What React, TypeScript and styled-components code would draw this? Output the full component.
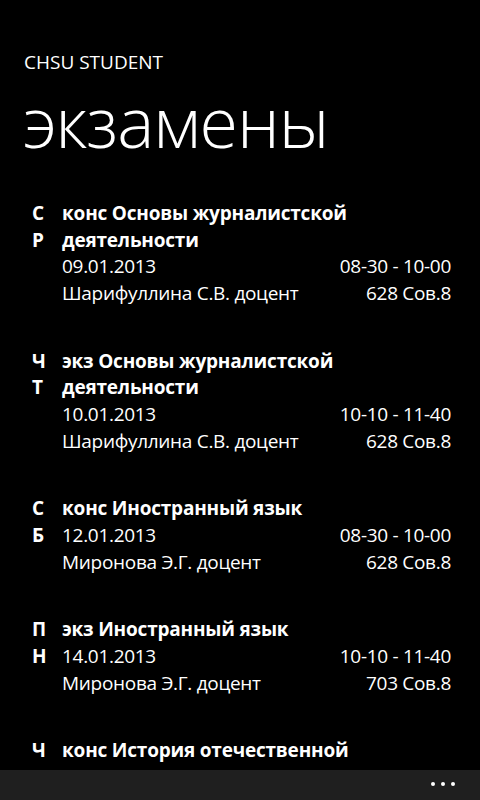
import React from "react";
import styled, { createGlobalStyle } from "styled-components";

const Global = createGlobalStyle`
  html, body {
    margin: 0;
    padding: 0;
    background: #000;
    overflow: hidden;
  }
  body {
    font-family: "Open Sans", "Noto Sans", sans-serif;
    color: #fff;
  }
`;

const Page = styled.div`
  width: 480px;
  height: 800px;
  background: #000;
  display: flex;
  flex-direction: column;
  overflow: hidden;
`;

const Scroller = styled.main`
  flex: 1;
  min-height: 0;
  overflow: hidden;
`;

const Header = styled.header`
  padding: 50px 0 0 24px;
`;

const AppTitle = styled.div`
  font-size: 19px;
  line-height: 24px;
`;

const PageTitle = styled.h1`
  margin: 7px 0 0 -2px;
  font-size: 70px;
  font-weight: 300;
  line-height: 80px;
  letter-spacing: -1px;
`;

const List = styled.div`
  display: flex;
  flex-direction: column;
  gap: 41px;
  padding: 0 29px 0 32px;
  margin-top: 39px;
`;

const Entry = styled.div`
  display: flex;
  font-size: 19px;
  line-height: 26.67px;
`;

const Day = styled.div`
  width: 30px;
  flex: none;
  font-weight: 700;
  display: flex;
  flex-direction: column;
`;

const Body = styled.div`
  flex: 1;
  min-width: 0;
`;

const Subject = styled.div`
  font-weight: 700;
  letter-spacing: -0.2px;
`;

const Row = styled.div`
  display: flex;
  justify-content: space-between;
  letter-spacing: -0.3px;
`;

const AppBar = styled.footer`
  flex: none;
  height: 30px;
  background: #1f1f1f;
  display: flex;
  justify-content: flex-end;
  align-items: center;
  padding-right: 25px;
  gap: 6px;
`;

const Dot = styled.span`
  width: 4px;
  height: 4px;
  border-radius: 50%;
  background: #fff;
  margin-top: -2px;
`;

type Exam = {
  day: string;
  subject: string;
  date?: string;
  time?: string;
  teacher?: string;
  room?: string;
};

const exams: Exam[] = [
  {
    day: "СР",
    subject: "конс Основы журналистской деятельности",
    date: "09.01.2013",
    time: "08-30 - 10-00",
    teacher: "Шарифуллина С.В. доцент",
    room: "628 Сов.8",
  },
  {
    day: "ЧТ",
    subject: "экз Основы журналистской деятельности",
    date: "10.01.2013",
    time: "10-10 - 11-40",
    teacher: "Шарифуллина С.В. доцент",
    room: "628 Сов.8",
  },
  {
    day: "СБ",
    subject: "конс Иностранный язык",
    date: "12.01.2013",
    time: "08-30 - 10-00",
    teacher: "Миронова Э.Г. доцент",
    room: "628 Сов.8",
  },
  {
    day: "ПН",
    subject: "экз Иностранный язык",
    date: "14.01.2013",
    time: "10-10 - 11-40",
    teacher: "Миронова Э.Г. доцент",
    room: "703 Сов.8",
  },
  {
    day: "Ч",
    subject: "конс История отечественной",
  },
];

export default function App() {
  return (
    <>
      <Global />
      <Page>
        <Scroller>
          <Header>
            <AppTitle>CHSU STUDENT</AppTitle>
            <PageTitle>экзамены</PageTitle>
          </Header>
          <List>
            {exams.map((e, i) => (
              <Entry key={i}>
                <Day>
                  {e.day.split("").map((c, j) => (
                    <span key={j}>{c}</span>
                  ))}
                </Day>
                <Body>
                  <Subject>{e.subject}</Subject>
                  {e.date && (
                    <Row>
                      <span>{e.date}</span>
                      <span>{e.time}</span>
                    </Row>
                  )}
                  {e.teacher && (
                    <Row>
                      <span>{e.teacher}</span>
                      <span>{e.room}</span>
                    </Row>
                  )}
                </Body>
              </Entry>
            ))}
          </List>
        </Scroller>
        <AppBar>
          <Dot />
          <Dot />
          <Dot />
        </AppBar>
      </Page>
    </>
  );
}
